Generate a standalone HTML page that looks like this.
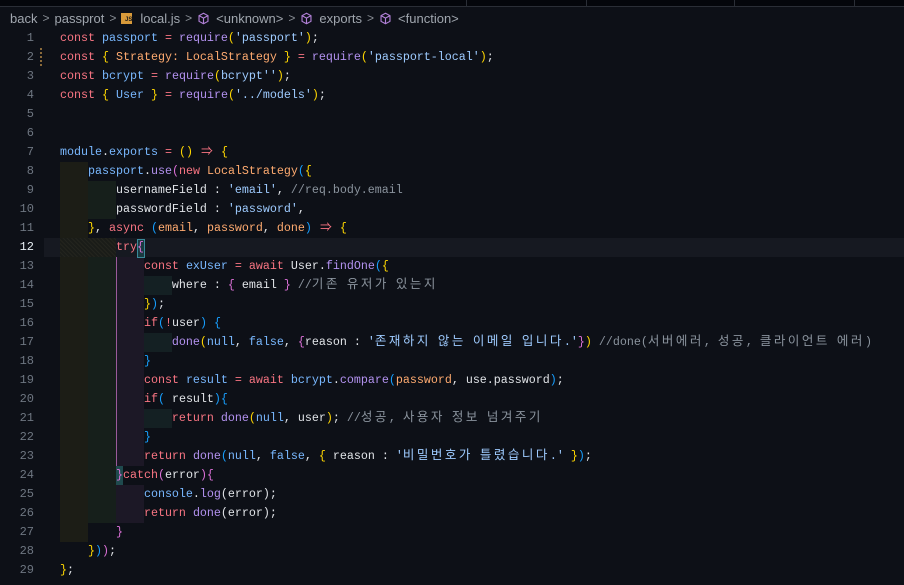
<!DOCTYPE html>
<html><head><meta charset="utf-8"><style>
body{margin:0;width:904px;height:585px;background:#0d1017;overflow:hidden;position:relative;font-family:"Liberation Mono","Noto Sans CJK KR",monospace;}
.tabs{position:absolute;left:0;top:0;width:904px;height:6px;background:#04060b;border-bottom:1px solid #2a2e36}
.tabs i{position:absolute;top:0;height:6px;border-left:1px solid #2a2e36}
.bc{position:absolute;top:9px;left:10px;font:13px "Liberation Sans","Noto Sans CJK KR",sans-serif;color:#a0a6ae;white-space:nowrap;display:flex;align-items:center;height:18px}
.bc .sep{color:#8a8f96;margin:0 5px;font-size:12px}
.js{display:inline-block;width:11px;height:11px;background:#d89a3a;color:#1a1a1a;font-size:6px;line-height:14px;text-align:right;margin-right:8px;font-weight:bold}
.cube{margin-right:6px}
.ln{position:absolute;left:0;width:34px;text-align:right;color:#6e7681;font-size:12px;line-height:19px;height:19px}
.row{position:absolute;left:60px;height:19px;line-height:19px;font-size:11.67px;color:#e1e4e8;white-space:pre}
.g{position:absolute;height:19px}
.g1{background:#1c1d16}.g2{background:#161f1b}.g3{background:#1c1826}.g4{background:#142023}
.k{color:#f97583}.v{color:#79b8ff}.f{color:#b392f0}.s{color:#9ecbff}.p{color:#ffab70}.c{color:#8b949e}.y{color:#ffd700}.m{color:#da70d6}.b{color:#179fff}
.h{font-size:12.5px;letter-spacing:2.5px;line-height:17px;vertical-align:top;position:relative;top:1px}
.ar{display:inline-block;width:14px;text-align:center}
</style></head><body>
<div class="tabs"><i style="left:466px"></i><i style="left:586px"></i><i style="left:734px"></i><i style="left:854px"></i></div>
<div class="bc">back<span class="sep">&gt;</span>passprot<span class="sep">&gt;</span><span class="js">JS</span>local.js<span class="sep">&gt;</span>
<svg class="cube" width="13" height="13" viewBox="0 0 16 16"><path d="M8 1.5l5.5 3v7L8 14.5 2.5 11.5v-7z M2.5 4.5L8 7.5l5.5-3 M8 7.5v7" fill="none" stroke="#b180d7" stroke-width="1.4"/></svg>&lt;unknown&gt;<span class="sep">&gt;</span>
<svg class="cube" width="13" height="13" viewBox="0 0 16 16"><path d="M8 1.5l5.5 3v7L8 14.5 2.5 11.5v-7z M2.5 4.5L8 7.5l5.5-3 M8 7.5v7" fill="none" stroke="#b180d7" stroke-width="1.4"/></svg>exports<span class="sep">&gt;</span>
<svg class="cube" width="13" height="13" viewBox="0 0 16 16"><path d="M8 1.5l5.5 3v7L8 14.5 2.5 11.5v-7z M2.5 4.5L8 7.5l5.5-3 M8 7.5v7" fill="none" stroke="#b180d7" stroke-width="1.4"/></svg>&lt;function&gt;</div>

<div style="position:absolute;left:44px;top:238px;width:860px;height:19px;background:#161921"></div>
<div style="position:absolute;left:40px;top:48px;width:2px;height:19px;background:repeating-linear-gradient(#8a6a3a 0 2px,transparent 2px 4px)"></div>

<div class="g g1" style="left:60px;top:162px;width:28px;height:76px"></div>
<div class="g g2" style="left:88px;top:181px;width:28px;height:38px"></div>
<div class="g" style="left:60px;top:238px;width:56px;height:19px;background:repeating-linear-gradient(45deg,#23241e 0 1px,#1a1c18 1px 3px)"></div>
<div class="g g1" style="left:60px;top:257px;width:28px;height:285px"></div>
<div class="g g2" style="left:88px;top:257px;width:28px;height:266px"></div>
<div class="g g3" style="left:116px;top:257px;width:28px;height:209px;border-left:1px solid #9a5a9a;box-sizing:border-box"></div>
<div class="g g3" style="left:116px;top:485px;width:28px;height:38px"></div>
<div class="g g4" style="left:144px;top:276px;width:28px"></div>
<div class="g g4" style="left:144px;top:333px;width:28px"></div>
<div class="g g4" style="left:144px;top:409px;width:28px"></div>
<div class="g" style="left:116px;top:466px;width:7px;height:19px;background:#1f4a4e"></div>
<div class="g" style="left:137px;top:239px;width:6px;height:17px;border:1px solid #3a8a9a;background:#1a3a40"></div>

<div class="ln" style="top:29px">1</div><div class="ln" style="top:48px">2</div><div class="ln" style="top:67px">3</div><div class="ln" style="top:86px">4</div><div class="ln" style="top:105px">5</div><div class="ln" style="top:124px">6</div><div class="ln" style="top:143px">7</div><div class="ln" style="top:162px">8</div><div class="ln" style="top:181px">9</div><div class="ln" style="top:200px">10</div><div class="ln" style="top:219px">11</div><div class="ln" style="top:238px;color:#e6edf3">12</div><div class="ln" style="top:257px">13</div><div class="ln" style="top:276px">14</div><div class="ln" style="top:295px">15</div><div class="ln" style="top:314px">16</div><div class="ln" style="top:333px">17</div><div class="ln" style="top:352px">18</div><div class="ln" style="top:371px">19</div><div class="ln" style="top:390px">20</div><div class="ln" style="top:409px">21</div><div class="ln" style="top:428px">22</div><div class="ln" style="top:447px">23</div><div class="ln" style="top:466px">24</div><div class="ln" style="top:485px">25</div><div class="ln" style="top:504px">26</div><div class="ln" style="top:523px">27</div><div class="ln" style="top:542px">28</div><div class="ln" style="top:561px">29</div>

<div class="row" style="top:29px"><span class="k">const</span> <span class="v">passport</span> <span class="k">=</span> <span class="f">require</span><span class="y">(</span><span class="s">'passport'</span><span class="y">)</span>;</div>
<div class="row" style="top:48px"><span class="k">const</span> <span class="y">{</span> <span class="p">Strategy: LocalStrategy</span> <span class="y">}</span> <span class="k">=</span> <span class="f">require</span><span class="y">(</span><span class="s">'passport-local'</span><span class="y">)</span>;</div>
<div class="row" style="top:67px"><span class="k">const</span> <span class="v">bcrypt</span> <span class="k">=</span> <span class="f">require</span><span class="y">(</span><span class="s">bcrypt''</span><span class="y">)</span>;</div>
<div class="row" style="top:86px"><span class="k">const</span> <span class="y">{</span> <span class="v">User</span> <span class="y">}</span> <span class="k">=</span> <span class="f">require</span><span class="y">(</span><span class="s">'../models'</span><span class="y">)</span>;</div>
<div class="row" style="top:143px"><span class="v">module</span>.<span class="v">exports</span> <span class="k">=</span> <span class="y">()</span> <span class="k ar">⇒</span> <span class="y">{</span></div>
<div class="row" style="top:162px">    <span class="v">passport</span>.<span class="f">use</span><span class="m">(</span><span class="k">new</span> <span class="p">LocalStrategy</span><span class="b">(</span><span class="y">{</span></div>
<div class="row" style="top:181px">        usernameField : <span class="s">'email'</span>, <span class="c">//req.body.email</span></div>
<div class="row" style="top:200px">        passwordField : <span class="s">'password'</span>,</div>
<div class="row" style="top:219px">    <span class="y">}</span>, <span class="k">async</span> <span class="b">(</span><span class="p">email</span>, <span class="p">password</span>, <span class="p">done</span><span class="b">)</span> <span class="k ar">⇒</span> <span class="y">{</span></div>
<div class="row" style="top:238px">        <span class="k">try</span><span class="m">{</span></div>
<div class="row" style="top:257px">            <span class="k">const</span> <span class="v">exUser</span> <span class="k">=</span> <span class="k">await</span> User.<span class="f">findOne</span><span class="b">(</span><span class="y">{</span></div>
<div class="row" style="top:276px">                where : <span class="m">{</span> email <span class="m">}</span> <span class="c">//<span class="h">기존</span> <span class="h">유저가</span> <span class="h">있는지</span></span></div>
<div class="row" style="top:295px">            <span class="y">}</span><span class="b">)</span>;</div>
<div class="row" style="top:314px">            <span class="k">if</span><span class="b">(</span><span class="k">!</span>user<span class="b">)</span> <span class="b">{</span></div>
<div class="row" style="top:333px">                <span class="f">done</span><span class="y">(</span><span class="v">null</span>, <span class="v">false</span>, <span class="m">{</span>reason : <span class="s">'<span class="h">존재하지</span> <span class="h">않는</span> <span class="h">이메일</span> <span class="h">입니다</span>.'</span><span class="m">}</span><span class="y">)</span> <span class="c">//done(<span class="h">서버에러</span>, <span class="h">성공</span>, <span class="h">클라이언트</span> <span class="h">에러</span>)</span></div>
<div class="row" style="top:352px">            <span class="b">}</span></div>
<div class="row" style="top:371px">            <span class="k">const</span> <span class="v">result</span> <span class="k">=</span> <span class="k">await</span> <span class="v">bcrypt</span>.<span class="f">compare</span><span class="b">(</span><span class="p">password</span>, use.password<span class="b">)</span>;</div>
<div class="row" style="top:390px">            <span class="k">if</span><span class="b">(</span> result<span class="b">){</span></div>
<div class="row" style="top:409px">                <span class="k">return</span> <span class="f">done</span><span class="y">(</span><span class="v">null</span>, user<span class="y">)</span>; <span class="c">//<span class="h">성공</span>, <span class="h">사용자</span> <span class="h">정보</span> <span class="h">넘겨주기</span></span></div>
<div class="row" style="top:428px">            <span class="b">}</span></div>
<div class="row" style="top:447px">            <span class="k">return</span> <span class="f">done</span><span class="b">(</span><span class="v">null</span>, <span class="v">false</span>, <span class="y">{</span> reason : <span class="s">'<span class="h">비밀번호가</span> <span class="h">틀렸습니다</span>.'</span> <span class="y">}</span><span class="b">)</span>;</div>
<div class="row" style="top:466px">        <span class="m">}</span><span class="k">catch</span><span class="m">(</span>error<span class="m">){</span></div>
<div class="row" style="top:485px">            <span class="v">console</span>.<span class="f">log</span>(error);</div>
<div class="row" style="top:504px">            <span class="k">return</span> <span class="f">done</span>(error);</div>
<div class="row" style="top:523px">        <span class="m">}</span></div>
<div class="row" style="top:542px">    <span class="y">}</span><span class="b">)</span><span class="m">)</span>;</div>
<div class="row" style="top:561px"><span class="y">}</span>;</div>
</body></html>
